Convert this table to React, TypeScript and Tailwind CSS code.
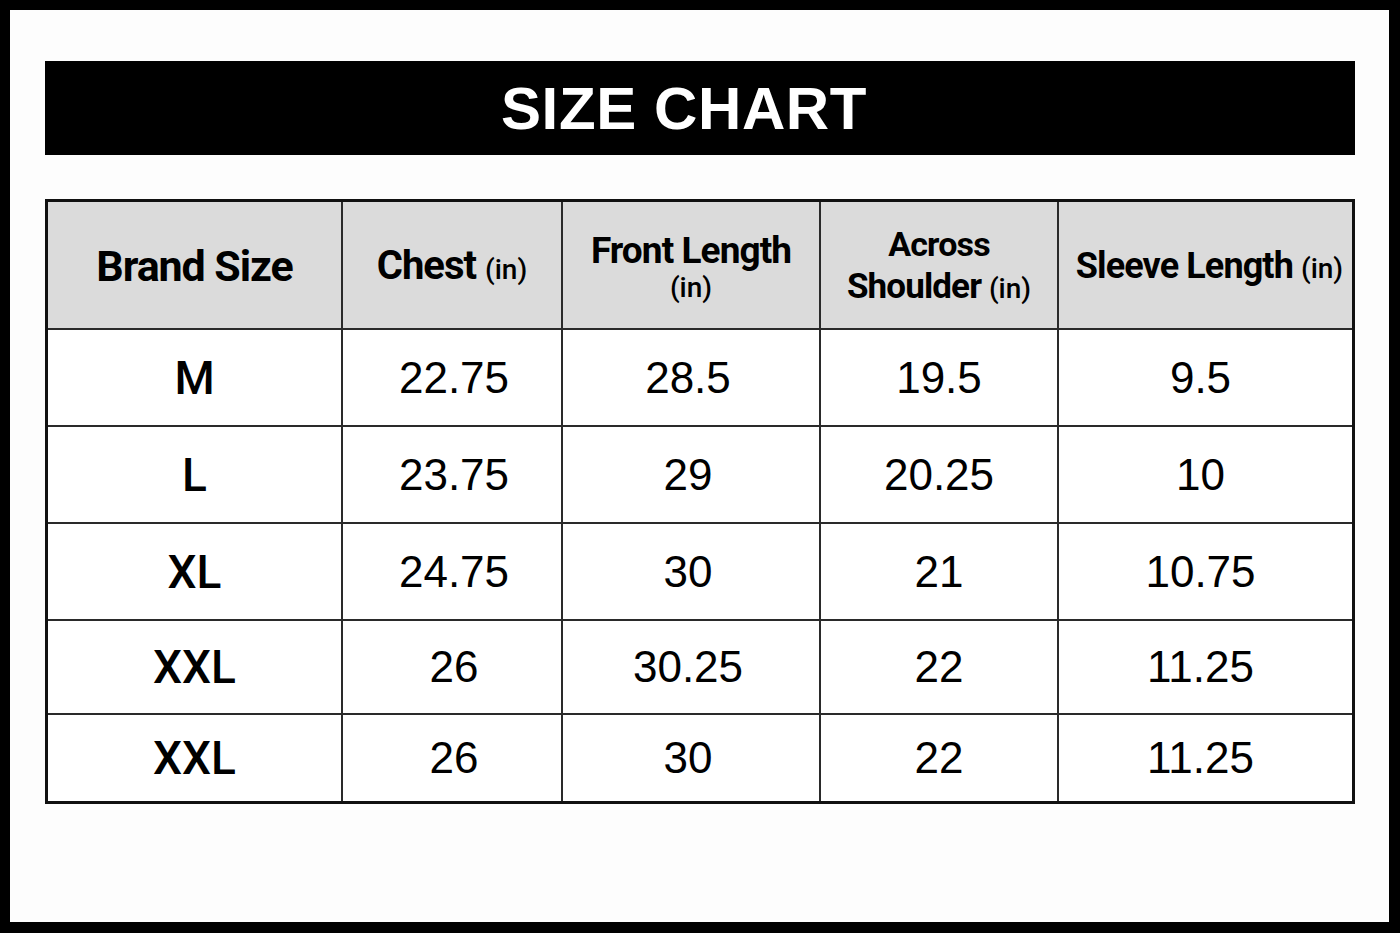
const rows = [
  ["M", "22.75", "28.5", "19.5", "9.5"],
  ["L", "23.75", "29", "20.25", "10"],
  ["XL", "24.75", "30", "21", "10.75"],
  ["XXL", "26", "30.25", "22", "11.25"],
  ["XXL", "26", "30", "22", "11.25"],
];

const heads = "font-['Roboto',sans-serif] font-bold text-black tracking-[-0.025em]";
const unit = "font-['Roboto',sans-serif] font-medium text-[28px] tracking-normal";

export default function App() {
  return (
    <div className="w-[1400px] h-[933px] bg-black pt-[10px] pl-[10px] pr-[11px] pb-[11px]">
      <div className="w-full h-full bg-[#fdfdfd] pt-[51px] pl-[35px] pr-[34px]">
        {/* Title */}
        <div className="h-[94px] bg-black flex items-center justify-center pr-[32px]">
          <h1 className="font-['Liberation_Sans',Arial,sans-serif] font-bold text-white text-[60px] leading-none tracking-[0.01em] pt-[2px]">
            SIZE CHART
          </h1>
        </div>

        {/* Table */}
        <div className="mt-[44px] border-[3px] border-[#111] grid grid-cols-[295px_220px_258px_238px_1fr] grid-rows-[128px_97px_97px_97px_94px_86px]">
          <div className="bg-[#dbdbdb] border-r-2 border-b-2 border-[#2a2a2a] flex items-center justify-center pt-[2px]">
            <span className={`${heads} text-[43px]`}>Brand Size</span>
          </div>
          <div className="bg-[#dbdbdb] border-r-2 border-b-2 border-[#2a2a2a] flex items-center justify-center pt-[2px]">
            <span className={`${heads} text-[40px]`}>
              Chest <span className={unit}>(in)</span>
            </span>
          </div>
          <div className="bg-[#dbdbdb] border-r-2 border-b-2 border-[#2a2a2a] flex flex-col items-center justify-center pt-[6px]">
            <span className={`${heads} text-[37px] leading-[40px]`}>Front Length</span>
            <span className={`${unit} leading-[34px]`}>(in)</span>
          </div>
          <div className="bg-[#dbdbdb] border-r-2 border-b-2 border-[#2a2a2a] flex flex-col items-center justify-center pt-[4px]">
            <span className={`${heads} text-[34px] leading-[42px]`}>Across</span>
            <span className={`${heads} text-[35px] leading-[44px]`}>
              Shoulder <span className={unit}>(in)</span>
            </span>
          </div>
          <div className="bg-[#dbdbdb] border-b-2 border-[#2a2a2a] flex items-center justify-center pl-[8px] pt-[2px]">
            <span className={`${heads} text-[36px] whitespace-nowrap`}>
              Sleeve Length <span className={unit}>(in)</span>
            </span>
          </div>

          {rows.map((row, ri) =>
            row.map((cell, ci) => (
              <div
                key={`${ri}-${ci}`}
                className={`flex items-center justify-center bg-white border-[#2a2a2a] ${ci < 4 ? "border-r-2" : "pr-[10px]"} ${ci === 2 ? "pr-[6px]" : ""} ${ci === 1 ? "pl-[4px]" : ""} ${ri < rows.length - 1 ? "border-b-2" : ""}`}
              >
                {ci === 0 ? (
                  <span className="font-['Roboto',sans-serif] font-medium text-[46px] text-black leading-none">{cell}</span>
                ) : (
                  <span className="font-['Liberation_Sans',Arial,sans-serif] text-[44px] text-black leading-none">{cell}</span>
                )}
              </div>
            ))
          )}
        </div>
      </div>
    </div>
  );
}
